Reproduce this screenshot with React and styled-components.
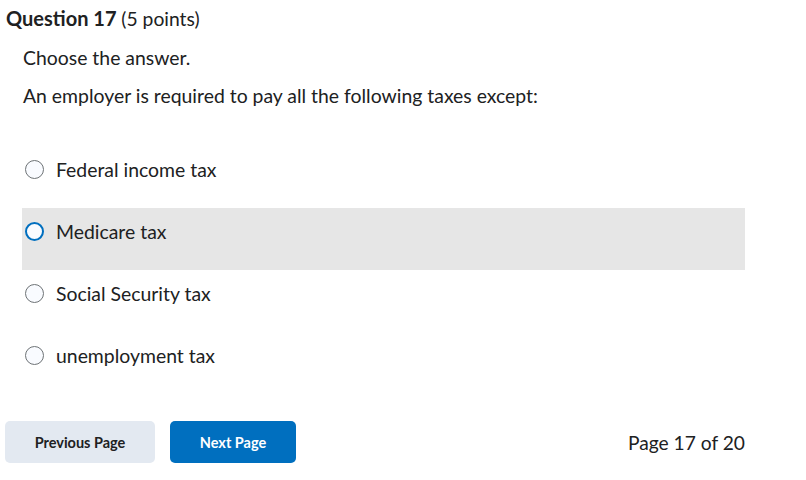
import React from 'react';
import styled, {createGlobalStyle} from 'styled-components';

const GlobalStyle = createGlobalStyle`
    body {
        margin: 0;
        background: #ffffff;
        font-family: Lato, "Noto Sans", sans-serif;
        color: #202122;
    }
`;

const Page = styled.div`
    width: 806px;
    height: 480px;
`;

const Header = styled.h2`
    margin: 0;
    padding: 7px 0 0 6px;
    font-size: 20px;
    font-weight: 700;
    line-height: 22px;
    color: #202122;

    span {
        font-weight: 400;
        font-size: 19.3px;
    }
`;

const Body = styled.div`
    padding: 0 61px 0 22px;
`;

const Text = styled.p`
    margin: ${(props) => props.top}px 0 0 1px;
    font-size: 19.4px;
    line-height: 22px;
`;

const Options = styled.div`
    margin-top: 39px;
    display: flex;
    flex-direction: column;
`;

const Option = styled.label`
    box-sizing: border-box;
    height: 62px;
    display: flex;
    align-items: center;
    gap: 12px;
    padding: 0 0 15px 3px;
    background: ${(props) => (props.active ? '#e6e6e6' : 'transparent')};
    font-size: 19.4px;
    cursor: pointer;
`;

const Radio = styled.span`
    box-sizing: border-box;
    width: 19px;
    height: 19px;
    border-radius: 50%;
    background: #f9fbff;
    border: ${(props) => (props.active ? '2px solid #006fbf' : '1px solid #6e7376')};
    flex-shrink: 0;
`;

const Footer = styled.div`
    margin-top: 27px;
    padding: 0 61px 0 5px;
    display: flex;
    align-items: center;
    gap: 15px;
`;

const Button = styled.button`
    height: 42px;
    padding: 0;
    width: ${(props) => props.w}px;
    border: none;
    border-radius: 5px;
    font-family: Lato, "Noto Sans", sans-serif;
    font-size: 14.5px;
    font-weight: 700;
    background: ${(props) => (props.primary ? '#006fbf' : '#e3e9f1')};
    color: ${(props) => (props.primary ? '#ffffff' : '#202122')};
    cursor: pointer;
`;

const PageCount = styled.div`
    margin-left: auto;
    font-size: 19.2px;
`;

const answers = ['Federal income tax', 'Medicare tax', 'Social Security tax', 'unemployment tax'];

const App = () => {
    return (
        <Page>
            <GlobalStyle />
            <Header>
                Question 17 <span>(5 points)</span>
            </Header>
            <Body>
                <Text top={17}>Choose the answer.</Text>
                <Text top={16}>An employer is required to pay all the following taxes except:</Text>
                <Options>
                    {answers.map((a, i) => (
                        <Option key={a} active={i === 1}>
                            <Radio active={i === 1} />
                            {a}
                        </Option>
                    ))}
                </Options>
            </Body>
            <Footer>
                <Button w={150}>Previous Page</Button>
                <Button primary w={126}>Next Page</Button>
                <PageCount>Page 17 of 20</PageCount>
            </Footer>
        </Page>
    );
};

export default App;
